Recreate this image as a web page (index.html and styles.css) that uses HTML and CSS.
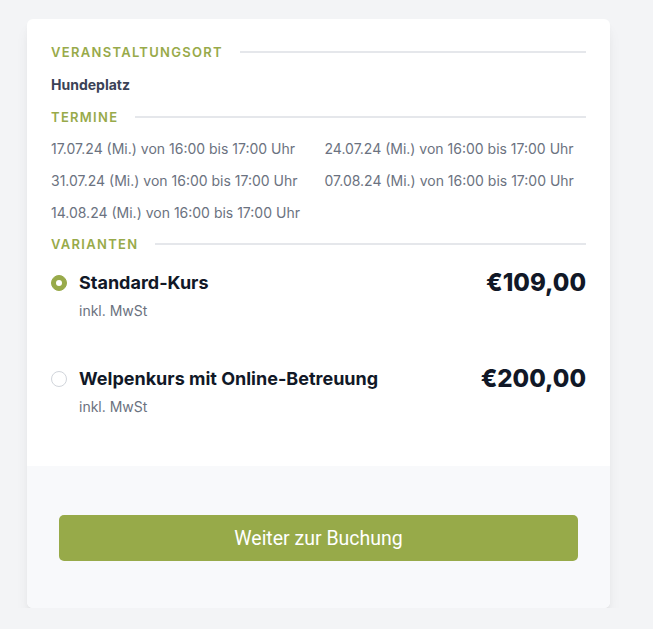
FILE: index.html
```html
<!DOCTYPE html>
<html lang="de">
<head>
<meta charset="utf-8">
<link rel="stylesheet" href="styles.css">
</head>
<body>
<div class="page">
  <div class="card">
    <div class="card-body">
      <div class="section-title"><span>Veranstaltungsort</span><span class="rule"></span></div>
      <div class="location">Hundeplatz</div>
      <div class="section-title termine"><span>Termine</span><span class="rule"></span></div>
      <div class="dates">
        <div>17.07.24 (Mi.) von 16:00 bis 17:00 Uhr</div>
        <div>24.07.24 (Mi.) von 16:00 bis 17:00 Uhr</div>
        <div>31.07.24 (Mi.) von 16:00 bis 17:00 Uhr</div>
        <div>07.08.24 (Mi.) von 16:00 bis 17:00 Uhr</div>
        <div>14.08.24 (Mi.) von 16:00 bis 17:00 Uhr</div>
      </div>
      <div class="section-title varianten"><span>Varianten</span><span class="rule"></span></div>
      <div class="variant">
        <span class="radio checked"></span>
        <div class="variant-info">
          <div class="variant-name">Standard-Kurs</div>
          <div class="variant-tax">inkl. MwSt</div>
        </div>
        <div class="price">€109,00</div>
      </div>
      <div class="variant">
        <span class="radio"></span>
        <div class="variant-info">
          <div class="variant-name">Welpenkurs mit Online-Betreuung</div>
          <div class="variant-tax">inkl. MwSt</div>
        </div>
        <div class="price">€200,00</div>
      </div>
    </div>
    <div class="card-footer">
      <button class="btn">Weiter zur Buchung</button>
    </div>
  </div>
</div>
</body>
</html>
```

FILE: styles.css
```css
html, body {
  margin: 0;
  padding: 0;
  background: #f3f4f6;
  font-family: Inter, "Liberation Sans", sans-serif;
}
.page {
  padding: 19px 0 0 27px;
}
.card {
  width: 583px;
  background: #fff;
  border-radius: 6px;
  overflow: hidden;
  box-shadow: 0 10px 15px -3px rgba(0,0,0,0.08), 0 4px 6px -2px rgba(0,0,0,0.05);
}
.card-body {
  padding: 24px 24px 21px;
}
.section-title {
  display: flex;
  align-items: center;
  gap: 17px;
  height: 18px;
  font-size: 13px;
  font-weight: 600;
  letter-spacing: 0.1em;
  text-transform: uppercase;
  color: #98aa4a;
}
.section-title .rule {
  flex: 1;
  height: 2px;
  background: #e5e7eb;
}
.location {
  margin-top: 14px;
  line-height: 20px;
  font-size: 14px;
  font-weight: 700;
  color: #3b4256;
}
.termine { margin-top: 13px; }
.dates {
  margin-top: 7px;
  display: grid;
  grid-template-columns: 1fr 1fr;
  column-gap: 12px;
  font-size: 14px;
  line-height: 32px;
  color: #6b7280;
}
.varianten { margin-top: 6px; }
.variant {
  display: flex;
  align-items: flex-start;
  padding: 18px 0 28px;
}
.radio {
  width: 16px;
  height: 16px;
  box-sizing: border-box;
  border-radius: 50%;
  border: 1px solid #d1d5db;
  background: #fff;
  margin-top: 4px;
  flex: none;
  position: relative;
}
.radio.checked {
  background: #98aa4a;
  border-color: #98aa4a;
}
.radio.checked::after {
  content: "";
  position: absolute;
  left: 4px;
  top: 4px;
  width: 6px;
  height: 6px;
  border-radius: 50%;
  background: #fff;
}
.variant-info {
  margin-left: 12px;
  flex: 1;
}
.variant-name {
  font-size: 18px;
  line-height: 24px;
  font-weight: 700;
  color: #111827;
}
.variant-tax {
  margin-top: 6px;
  font-size: 14px;
  line-height: 20px;
  color: #6b7280;
}
.price {
  font-size: 24px;
  line-height: 24px;
  font-weight: 800;
  color: #111827;
}
.card-footer {
  background: #f8f9fb;
  padding: 49px 32px 47px;
}
.btn {
  display: block;
  width: 100%;
  height: 46px;
  border: none;
  border-radius: 5px;
  background: #97aa49;
  color: #fff;
  font-family: Roboto, "Liberation Sans", sans-serif;
  font-size: 19.5px;
  font-weight: 400;
  cursor: pointer;
}
```
